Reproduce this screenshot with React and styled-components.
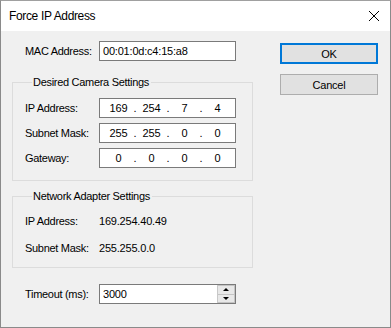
import React from 'react';
import styled, { createGlobalStyle } from 'styled-components';

const GlobalStyle = createGlobalStyle`
  html, body {
    margin: 0;
    padding: 0;
    background: #f0f0f0;
  }
  body {
    font-family: "Liberation Sans", Arial, sans-serif;
    font-size: 11px;
    color: #000;
  }
`;

const Window = styled.div`
  width: 391px;
  height: 328px;
  box-sizing: border-box;
  border: 1px solid #8a8a8a;
  border-top-color: #a0a0a0;
  background: #f0f0f0;
  display: flex;
  flex-direction: column;
`;

const TitleBar = styled.div`
  height: 30px;
  background: #fff;
  display: flex;
  align-items: center;
  justify-content: space-between;
  padding: 0 9px 0 8px;
  flex-shrink: 0;
`;

const Title = styled.span`
  font-size: 12px;
  letter-spacing: -0.35px;
  color: #000;
`;

const CloseIcon = styled.svg`
  width: 12px;
  height: 12px;
  margin-right: 1px;
`;

const Body = styled.div`
  flex: 1;
  display: grid;
  grid-template-columns: 241px 98px;
  column-gap: 27px;
  align-items: start;
  padding: 10px 12px 0 11px;
`;

const Column = styled.div`
  display: flex;
  flex-direction: column;
`;

const Row = styled.div`
  display: flex;
  align-items: center;
  height: 20px;
  padding-left: ${(p) => p.$indent || 0}px;
  margin-top: ${(p) => p.$top || 0}px;
`;

const Label = styled.span`
  width: 74px;
  flex-shrink: 0;
  letter-spacing: -0.3px;
  white-space: nowrap;
`;

const Value = styled.span`
  letter-spacing: -0.2px;
`;

const TextBox = styled.div`
  width: 137px;
  height: 20px;
  box-sizing: border-box;
  border: 1px solid #7a7a7a;
  background: #fff;
  display: flex;
  align-items: center;
  padding: ${(p) => (p.$ip ? '0 3px 0 4px' : '0 0 0 3px')};
  letter-spacing: -0.2px;
`;

const Segment = styled.span`
  width: 29px;
  text-align: center;
`;

const Dot = styled.span`
  width: 4px;
  text-align: center;
`;

const Group = styled.fieldset`
  margin: ${(p) => p.$top}px 0 0 0;
  padding: ${(p) => p.$pad};
  border: 1px solid #dcdcdc;
  display: flex;
  flex-direction: column;
  gap: ${(p) => p.$gap}px;
  min-width: 0;
`;

const Legend = styled.legend`
  padding: 0 2px 0 1px;
  margin-left: 7px;
  line-height: 14px;
  letter-spacing: -0.3px;
`;

const SpinText = styled.span`
  flex: 1;
`;

const Spinner = styled.div`
  width: 17px;
  height: 18px;
  display: flex;
  flex-direction: column;
  border-left: 1px solid #c8c8c8;
`;

const SpinButton = styled.div`
  flex: 1;
  background: #e8e8e8;
  border: 1px solid #c4c4c4;
  border-left: none;
  display: flex;
  align-items: center;
  justify-content: center;
  & + & {
    border-top: none;
  }
`;

const Arrow = styled.span`
  width: 0;
  height: 0;
  border-left: 3px solid transparent;
  border-right: 3px solid transparent;
  ${(p) => (p.$up ? 'border-bottom: 3px solid #000;' : 'border-top: 3px solid #000;')}
`;

const Buttons = styled.div`
  display: flex;
  flex-direction: column;
  gap: 10px;
  padding-top: 2px;
`;

const Button = styled.button`
  height: 21px;
  box-sizing: border-box;
  background: #e1e1e1;
  border: ${(p) => (p.$default ? '2px solid #0078d7' : '1px solid #adadad')};
  font-family: "Liberation Sans", Arial, sans-serif;
  font-size: 11px;
  color: #000;
  padding: 0;
  letter-spacing: -0.2px;
`;

const IpField = ({ parts }) => (
  <TextBox $ip>
    {parts.map((p, i) => (
      <React.Fragment key={i}>
        {i > 0 && <Dot>.</Dot>}
        <Segment>{p}</Segment>
      </React.Fragment>
    ))}
  </TextBox>
);

export default function App() {
  return (
    <>
      <GlobalStyle />
      <Window>
        <TitleBar>
          <Title>Force IP Address</Title>
          <CloseIcon viewBox="0 0 12 12">
            <path d="M1 1 L11 11 M11 1 L1 11" stroke="#000" strokeWidth="1" fill="none" />
          </CloseIcon>
        </TitleBar>
        <Body>
          <Column>
            <Row $indent={13}>
              <Label>MAC Address:</Label>
              <TextBox>00:01:0d:c4:15:a8</TextBox>
            </Row>
            <Group $top={14} $pad="9px 12px 12px 12px" $gap={5}>
              <Legend>Desired Camera Settings</Legend>
              <Row>
                <Label>IP Address:</Label>
                <IpField parts={['169', '254', '7', '4']} />
              </Row>
              <Row>
                <Label>Subnet Mask:</Label>
                <IpField parts={['255', '255', '0', '0']} />
              </Row>
              <Row>
                <Label>Gateway:</Label>
                <IpField parts={['0', '0', '0', '0']} />
              </Row>
            </Group>
            <Group $top={8} $pad="8px 12px 9px 12px" $gap={7}>
              <Legend>Network Adapter Settings</Legend>
              <Row>
                <Label>IP Address:</Label>
                <Value>169.254.40.49</Value>
              </Row>
              <Row>
                <Label>Subnet Mask:</Label>
                <Value>255.255.0.0</Value>
              </Row>
            </Group>
            <Row $indent={13} $top={16}>
              <Label>Timeout (ms):</Label>
              <TextBox>
                <SpinText>3000</SpinText>
                <Spinner>
                  <SpinButton><Arrow $up /></SpinButton>
                  <SpinButton><Arrow /></SpinButton>
                </Spinner>
              </TextBox>
            </Row>
          </Column>
          <Buttons>
            <Button $default>OK</Button>
            <Button>Cancel</Button>
          </Buttons>
        </Body>
      </Window>
    </>
  );
}
